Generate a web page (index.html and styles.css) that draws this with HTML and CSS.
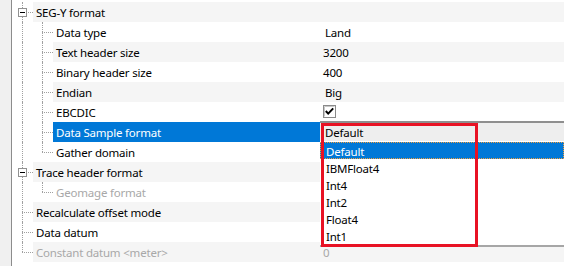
FILE: index.html
```html
<!DOCTYPE html>
<html lang="en">
<head>
    <meta charset="UTF-8">
    <title>SEG-Y properties</title>
    <link rel="stylesheet" href="styles.css">
</head>
<body>

<div class="panel">
    <div class="strip"></div>
    <div class="grid">
        <div class="row even">
            <span class="branch"><i class="box"></i></span>
            <span class="name">SEG-Y format</span>
            <span class="value"></span>
        </div>
        <div class="row">
            <span class="pipe"></span><span class="branch sub"></span>
            <span class="name">Data type</span>
            <span class="value pick">Land</span>
        </div>
        <div class="row even">
            <span class="pipe"></span><span class="branch sub"></span>
            <span class="name">Text header size</span>
            <span class="value">3200</span>
        </div>
        <div class="row">
            <span class="pipe"></span><span class="branch sub"></span>
            <span class="name">Binary header size</span>
            <span class="value">400</span>
        </div>
        <div class="row even">
            <span class="pipe"></span><span class="branch sub"></span>
            <span class="name">Endian</span>
            <span class="value pick">Big</span>
        </div>
        <div class="row">
            <span class="pipe"></span><span class="branch sub"></span>
            <span class="name">EBCDIC</span>
            <span class="value">
                <svg class="check" width="13" height="13" viewBox="0 0 13 13">
                    <rect x="0.5" y="0.5" width="12" height="12" fill="#fff" stroke="#8a8a8a"/>
                    <path d="M1.5 1.5 H11.5 M1.5 1.5 V11.5" stroke="#c8c8c8" fill="none"/>
                    <path d="M2.8 6 L5.2 8.6 L10.2 3.4" stroke="#000" stroke-width="2" fill="none"/>
                </svg>
            </span>
        </div>
        <div class="row even selected">
            <span class="pipe"></span><span class="branch sub"></span>
            <span class="name">Data Sample format</span>
            <span class="value combo">
                <span class="combo-head">Default</span>
                <span class="combo-list">
                    <span class="item active">Default</span>
                    <span class="item">IBMFloat4</span>
                    <span class="item">Int4</span>
                    <span class="item">Int2</span>
                    <span class="item">Float4</span>
                    <span class="item">Int1</span>
                </span>
                <span class="marker"></span>
            </span>
        </div>
        <div class="row">
            <span class="pipe"></span><span class="branch sub last"></span>
            <span class="name">Gather domain</span>
            <span class="value"></span>
        </div>
        <div class="row even">
            <span class="branch"><i class="box"></i></span>
            <span class="name">Trace header format</span>
            <span class="value"></span>
        </div>
        <div class="row off">
            <span class="pipe"></span><span class="branch sub last"></span>
            <span class="name">Geomage format</span>
            <span class="value"></span>
        </div>
        <div class="row even">
            <span class="branch"></span>
            <span class="name">Recalculate offset mode</span>
            <span class="value"></span>
        </div>
        <div class="row">
            <span class="branch"></span>
            <span class="name">Data datum</span>
            <span class="value"></span>
        </div>
        <div class="row even off">
            <span class="branch last"></span>
            <span class="name">Constant datum &lt;meter&gt;</span>
            <span class="value">0</span>
        </div>
    </div>
</div>

</body>
</html>
```

FILE: styles.css
```css
/* Property grid with an open drop-down */
body {
    margin: 0;
    background-color: #ffffff;
    font-family: "Noto Sans", sans-serif;
    font-size: 11.5px;
    letter-spacing: -0.2px;
    color: #000;
}

.panel {
    display: flex;
    width: 564px;
    height: 266px;
    overflow: hidden;
}

.strip {
    width: 11px;
    background-color: #f0f0f0;
    border-right: 1px solid #8c8c8c;
}

.grid {
    flex: 1;
    padding-top: 2px;
}

.row {
    display: flex;
    height: 20px;
    line-height: 22px;
}

.name {
    flex: 1;
    padding-left: 3px;
    white-space: nowrap;
}

.value {
    width: 244px;
    padding-left: 3px;
    box-sizing: border-box;
}

.value.pick {
    padding-left: 5px;
}

.row.even .name,
.row.even .value {
    background-color: #f5f5f5;
}

.row.selected .name {
    background-color: #0078d7;
    color: #fff;
}

.row.off {
    color: #a8a8a8;
}

/* Tree lines */
.branch,
.pipe {
    position: relative;
    width: 21px;
    flex-shrink: 0;
}

.branch.sub {
    width: 20px;
}

.branch::before,
.pipe::before {
    content: "";
    position: absolute;
    left: 10px;
    top: 0;
    bottom: 0;
    border-left: 1px dotted #a0a0a0;
}

.branch.sub::before {
    left: 9px;
}

.branch.last::before {
    bottom: 10px;
}

.branch::after {
    content: "";
    position: absolute;
    left: 10px;
    right: 0;
    top: 10px;
    border-top: 1px dotted #a0a0a0;
}

.branch.sub::after {
    left: 9px;
}

.box {
    position: absolute;
    left: 6px;
    top: 6px;
    width: 9px;
    height: 9px;
    box-sizing: border-box;
    border: 1px solid #919191;
    background-color: #fff;
    z-index: 1;
}

.box::after {
    content: "";
    position: absolute;
    left: 1px;
    top: 3px;
    width: 5px;
    height: 1px;
    background-color: #000;
}

.check {
    display: block;
    margin-top: 3px;
}

/* Drop-down */
.value.combo {
    position: relative;
    padding: 0;
}

.combo-head {
    display: block;
    margin-top: -1px;
    height: 18px;
    line-height: 20px;
    padding-left: 5px;
    border-top: 2px solid #8f8f8f;
    border-bottom: 1px solid #fff;
    background-color: #eeeeee;
    color: #000;
}

.combo-list {
    position: absolute;
    top: 20px;
    left: 0;
    right: 0;
    height: 103px;
    background-color: #fff;
    border-bottom: 2px solid #a6a6a6;
    z-index: 2;
}

.item {
    display: block;
    height: 17px;
    line-height: 19px;
    padding-left: 6px;
}

.item.active {
    background-color: #0078d7;
    color: #fff;
    outline: 1px dotted #f0a040;
    outline-offset: -1px;
}

.marker {
    position: absolute;
    left: 1px;
    top: 1px;
    width: 157px;
    height: 124px;
    box-sizing: border-box;
    border: 3px solid #e81224;
    z-index: 3;
}
```
